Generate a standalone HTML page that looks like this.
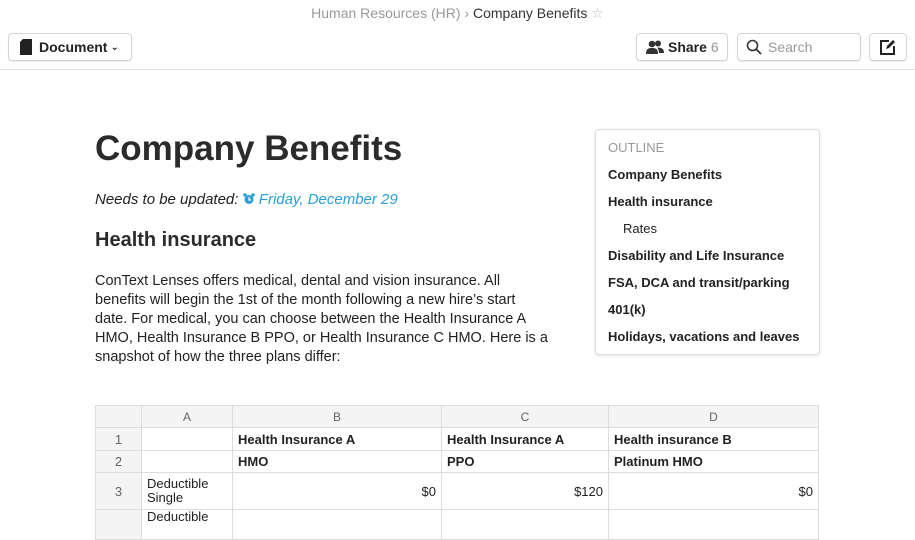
<!DOCTYPE html>
<html><head><meta charset="utf-8"><style>
*{box-sizing:border-box;margin:0;padding:0}
body{width:915px;height:515px;overflow:hidden;background:#fff;font-family:"Liberation Sans","DejaVu Sans",sans-serif;color:#222;position:relative}
.abs{position:absolute}
.btn{position:absolute;top:33px;height:28px;border:1px solid #d4d4d4;border-radius:4px;background:#fff;box-shadow:0 1px 1px rgba(0,0,0,.08);font-size:14px;display:flex;align-items:center}
table{position:absolute;left:95px;top:405px;border-collapse:collapse;font-size:13px;table-layout:fixed}
td{border:1px solid #ddd;padding:0 5px;height:22px;vertical-align:middle}
tr.h td{background:#f4f4f4;color:#666;text-align:center;font-size:12px}
td.rn{background:#f4f4f4;color:#666;text-align:center;width:46px}
.r{text-align:right}
.ol div{position:absolute;left:12px;font-size:13px;font-weight:bold;color:#222}
</style></head><body>
<div class="abs" style="top:5px;left:0;width:915px;text-align:center;font-size:14px;color:#999">Human Resources (HR) › <span style="color:#333">Company Benefits</span> <span style="color:#bbb">☆</span></div>
<div class="btn" style="left:8px;width:124px;padding-left:10px;font-weight:bold;color:#222"><svg width="14" height="16" viewBox="0 0 14 16" style="margin-right:6px"><path d="M4 0H13V16H1V3Z" fill="#222"/></svg>Document<span style="font-size:10px;margin-left:3px">⌄</span></div>
<div class="btn" style="left:636px;width:92px;padding-left:9px;font-weight:bold"><svg width="18" height="14" viewBox="0 0 18 14" style="margin-right:4px"><circle cx="6" cy="4" r="3.3" fill="#333"/><path d="M0 14C0 9 2 8 6 8S12 9 12 14Z" fill="#333"/><circle cx="12" cy="3.5" r="3" fill="#333"/><path d="M11 7.5C16 7.5 18 9 18 13H13C13 10 12 8.5 11 7.5Z" fill="#333"/></svg>Share&nbsp;<span style="font-weight:normal;color:#999">6</span></div>
<div class="btn" style="left:737px;width:124px;padding-left:8px;color:#999"><svg width="16" height="16" viewBox="0 0 16 16" style="margin-right:6px"><circle cx="6.5" cy="6.5" r="5" fill="none" stroke="#333" stroke-width="1.6"/><path d="M10 10L15 15" stroke="#333" stroke-width="1.8"/></svg>Search</div>
<div class="btn" style="left:869px;width:38px;justify-content:center"><svg width="16" height="16" viewBox="0 0 16 16"><path d="M9 2H1V15H14V7" fill="none" stroke="#222" stroke-width="2"/><path d="M6 10L7 7L13 1L15 3L9 9Z" fill="#222"/></svg></div>
<div class="abs" style="top:69px;left:0;width:915px;height:1px;background:#e2e2e2"></div>
<div class="abs" style="left:95px;top:129px;font-size:35px;font-weight:bold;color:#2b2b2b">Company Benefits</div>
<div class="abs" style="left:95px;top:191px;font-size:15px;font-style:italic;color:#222">Needs to be updated: <svg width="12" height="12" viewBox="0 0 12 12" style="vertical-align:-1px"><circle cx="6" cy="6.5" r="4.5" fill="#2a9fd6"/><circle cx="2" cy="2" r="1.8" fill="#2a9fd6"/><circle cx="10" cy="2" r="1.8" fill="#2a9fd6"/><path d="M6 4V7H8" stroke="#fff" stroke-width="1.2" fill="none"/></svg> <span style="color:#2a9fd6">Friday, December 29</span></div>
<div class="abs" style="left:95px;top:229px;font-size:20px;font-weight:bold;color:#2b2b2b">Health insurance</div>
<div class="abs" style="left:95px;top:272px;width:455px;font-size:14.5px;line-height:19px;color:#222">ConText Lenses offers medical, dental and vision insurance. All benefits will begin the 1st of the month following a new hire’s start date. For medical, you can choose between the Health Insurance A HMO, Health Insurance B PPO, or Health Insurance C HMO. Here is a snapshot of how the three plans differ:</div>
<div class="abs ol" style="left:595px;top:129px;width:225px;height:226px;border:1px solid #ddd;border-radius:4px;box-shadow:0 1px 3px rgba(0,0,0,.12)">
<div style="top:10px;color:#999;font-weight:normal">OUTLINE</div>
<div style="top:37px">Company Benefits</div>
<div style="top:64px">Health insurance</div>
<div style="top:91px;left:27px;font-weight:normal">Rates</div>
<div style="top:118px">Disability and Life Insurance</div>
<div style="top:145px">FSA, DCA and transit/parking</div>
<div style="top:172px">401(k)</div>
<div style="top:199px">Holidays, vacations and leaves</div>
</div>
<table style="border:1px solid #888">
<tr class="h"><td style="width:46px"></td><td style="width:91px">A</td><td style="width:209px">B</td><td style="width:167px">C</td><td style="width:210px">D</td></tr>
<tr style="height:23px"><td class="rn">1</td><td></td><td><b>Health Insurance A</b></td><td><b>Health Insurance A</b></td><td><b>Health insurance B</b></td></tr>
<tr><td class="rn">2</td><td></td><td><b>HMO</b></td><td><b>PPO</b></td><td><b>Platinum HMO</b></td></tr>
<tr style="height:37px"><td class="rn">3</td><td style="line-height:14px">Deductible<br>Single</td><td class="r">$0</td><td class="r">$120</td><td class="r">$0</td></tr>
<tr style="height:30px"><td class="rn"></td><td style="vertical-align:top;line-height:14px">Deductible</td><td></td><td></td><td></td></tr>
</table>
</body></html>
